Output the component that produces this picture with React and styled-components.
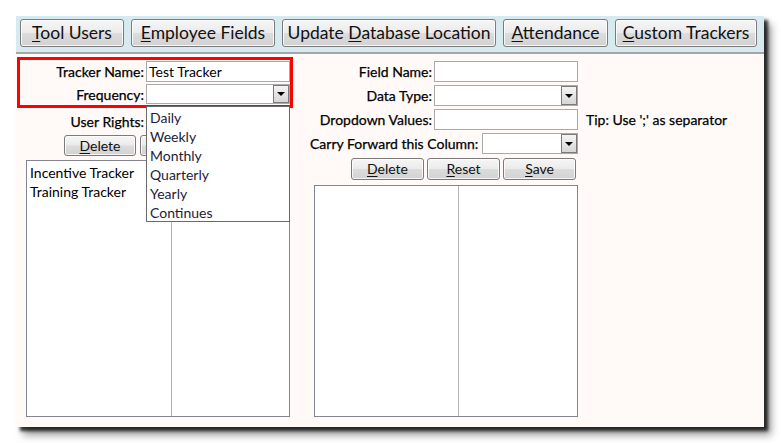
import React from "react";
import styled, { createGlobalStyle } from "styled-components";

const Global = createGlobalStyle`
  html, body {
    margin: 0;
    padding: 0;
    background: #ffffff;
  }
  body {
    font-family: "Lato", "Open Sans", sans-serif;
  }
`;

const Page = styled.div`
  min-height: 443px;
  box-sizing: border-box;
  padding: 16px 0 0 16px;
`;

const Window = styled.div`
  width: 748px;
  height: 411px;
  background: #fffaf7;
  box-shadow: 4px 4px 3px rgba(0, 0, 0, 0.75), 7px 8px 8px rgba(0, 0, 0, 0.4);
  display: flex;
  flex-direction: column;
`;

const TabBar = styled.div`
  display: flex;
  gap: 7px;
  padding: 3px 0 0 4px;
  height: 38px;
  box-sizing: border-box;
  background: #d6eaf0;
  border-bottom: 2px solid #a3a6a8;
`;

const Button = styled.button`
  width: ${(p) => p.$w}px;
  height: ${(p) => p.$h || 22}px;
  padding: 0;
  border: 1px solid #7b7b7b;
  border-radius: 3px;
  background: linear-gradient(#f6f6f6 0%, #ebebeb 48%, #dcdcdc 52%, #d2d2d2 100%);
  box-shadow: inset 0 0 0 1px rgba(255, 255, 255, 0.8);
  font-family: "Lato", "Open Sans", sans-serif;
  font-size: ${(p) => p.$fs || 14}px;
  color: #111;
  line-height: 1;
  white-space: nowrap;
  u {
    text-decoration: underline;
    text-underline-offset: 2px;
  }
`;

const Body = styled.div`
  display: flex;
  gap: 17px;
  padding: 3px 0 0 1px;
`;

const LeftCol = styled.div`
  width: 276px;
  display: flex;
  flex-direction: column;
`;

const RedBox = styled.div`
  border: 3px solid #ff0000;
  padding: 1px 0 1px 0;
  display: flex;
  flex-direction: column;
  gap: 2px;
`;

const Row = styled.div`
  display: flex;
  align-items: center;
  gap: 2px;
  height: ${(p) => p.$h || 21}px;
  margin-top: ${(p) => p.$mt || 0}px;
  padding-left: ${(p) => p.$pl || 0}px;
`;

const Label = styled.label`
  width: ${(p) => (p.$w ? `${p.$w}px` : "auto")};
  text-align: right;
  font-size: 14px;
  color: #000;
  white-space: nowrap;
  -webkit-text-stroke: 0.25px #000;
`;

const Input = styled.div`
  width: ${(p) => p.$w || 144}px;
  height: ${(p) => p.$h || 21}px;
  box-sizing: border-box;
  border: 1px solid #a9a9a9;
  background: #fff;
  font-size: 14px;
  color: #000;
  padding-left: 2px;
  line-height: 19px;
`;

const SelectBox = styled.div`
  position: relative;
  width: ${(p) => p.$w || 144}px;
  height: ${(p) => p.$h || 21}px;
  box-sizing: border-box;
  border: 1px solid #a9a9a9;
  background: #fff;
  display: flex;
  justify-content: flex-end;
`;

const Arrow = styled.div`
  width: 16px;
  height: 100%;
  box-sizing: border-box;
  border: 1px solid #7a7a7a;
  background: linear-gradient(#f4f4f4, #d6d6d6);
  display: flex;
  align-items: center;
  justify-content: center;
  &::after {
    content: "";
    border-left: 4px solid transparent;
    border-right: 4px solid transparent;
    border-top: 4px solid #000;
  }
`;

const DropList = styled.ul`
  position: absolute;
  z-index: 5;
  left: -1px;
  top: calc(100% + 3px);
  width: 144px;
  height: 116px;
  box-sizing: border-box;
  margin: 0;
  padding: 1px 0 0 3px;
  list-style: none;
  background: #fff;
  border: 1px solid #6a6a6a;
  li {
    font-size: 14px;
    line-height: 19px;
    color: #1c1c3a;
  }
`;

const ButtonRow = styled.div`
  display: flex;
  gap: ${(p) => p.$gap || 4}px;
  justify-content: ${(p) => p.$justify || "flex-start"};
  width: ${(p) => (p.$w ? `${p.$w}px` : "auto")};
  box-sizing: border-box;
  padding: ${(p) => p.$pad || "0"};
  margin-top: ${(p) => p.$mt || 0}px;
`;

const ListBox = styled.div`
  width: 264px;
  height: ${(p) => p.$h}px;
  box-sizing: border-box;
  margin: ${(p) => p.$m};
  border: 1px solid #838690;
  background: #fff;
  display: grid;
  grid-template-columns: ${(p) => p.$split}px 1fr;
`;

const ListCol = styled.div`
  border-right: ${(p) => (p.$last ? "none" : "1px solid #b4b4b4")};
  padding: 2px 0 0 3px;
  font-size: 14px;
  color: #000;
  line-height: 19px;
`;

const RightCol = styled.div`
  display: flex;
  flex-direction: column;
  padding-top: 4px;
`;

const Fields = styled.div`
  display: flex;
  flex-direction: column;
  gap: 3px;
`;

const Pair = styled.div`
  width: 268px;
  display: flex;
  justify-content: flex-end;
  align-items: center;
  gap: ${(p) => p.$gap || 2}px;
`;

const Tip = styled.span`
  margin-left: 6px;
  font-size: 14px;
  color: #000;
  white-space: nowrap;
  -webkit-text-stroke: 0.25px #000;
`;

const tabs = [
  { k: "T", rest: "ool Users", w: 104 },
  { k: "E", rest: "mployee Fields", w: 144 },
  { pre: "Update ", k: "D", rest: "atabase Location", w: 214 },
  { k: "A", rest: "ttendance", w: 105 },
  { k: "C", rest: "ustom Trackers", w: 142 },
];

const freq = ["Daily", "Weekly", "Monthly", "Quarterly", "Yearly", "Continues"];

export default function App() {
  return (
    <Page>
      <Global />
      <Window>
        <TabBar>
          {tabs.map((t) => (
            <Button key={t.rest} $w={t.w} $h={28} $fs={17.5}>
              {t.pre}
              <u>{t.k}</u>
              {t.rest}
            </Button>
          ))}
        </TabBar>
        <Body>
          <LeftCol>
            <RedBox>
              <Row>
                <Label $w={124}>Tracker Name:</Label>
                <Input>Test Tracker</Input>
              </Row>
              <Row $h={20}>
                <Label $w={124}>Frequency:</Label>
                <SelectBox $h={20}>
                  <Arrow />
                  <DropList>
                    {freq.map((f) => (
                      <li key={f}>{f}</li>
                    ))}
                  </DropList>
                </SelectBox>
              </Row>
            </RedBox>
            <Row $h={20} $mt={3} $pl={3}>
              <Label $w={124}>User Rights:</Label>
              <SelectBox $h={20}>
                <Arrow />
              </SelectBox>
            </Row>
            <ButtonRow $pad="0 0 0 47px" $mt={4}>
              <Button $w={72} $h={21}>
                <u>D</u>elete
              </Button>
              <Button $w={72} $h={21} aria-label="Reset" />
            </ButtonRow>
            <ListBox $h={257} $m="4px 0 0 9px" $split={145}>
              <ListCol>
                Incentive Tracker
                <br />
                Training Tracker
              </ListCol>
              <ListCol $last />
            </ListBox>
          </LeftCol>
          <RightCol>
            <Fields>
              <Row>
                <Pair>
                  <Label>Field Name:</Label>
                  <Input />
                </Pair>
              </Row>
              <Row>
                <Pair>
                  <Label>Data Type:</Label>
                  <SelectBox>
                    <Arrow />
                  </SelectBox>
                </Pair>
              </Row>
              <Row>
                <Pair>
                  <Label>Dropdown Values:</Label>
                  <Input />
                </Pair>
                <Tip>Tip: Use ';' as separator</Tip>
              </Row>
              <Row>
                <Pair $gap={4}>
                  <Label>Carry Forward this Column:</Label>
                  <SelectBox $w={96}>
                    <Arrow />
                  </SelectBox>
                </Pair>
              </Row>
            </Fields>
            <ButtonRow $justify="flex-end" $gap={3} $pad="0 2px 0 0" $mt={4} $w={268}>
              <Button $w={73}>
                <u>D</u>elete
              </Button>
              <Button $w={73}>
                <u>R</u>eset
              </Button>
              <Button $w={73}>
                <u>S</u>ave
              </Button>
            </ButtonRow>
            <ListBox $h={232} $m="5px 0 0 4px" $split={144}>
              <ListCol />
              <ListCol $last />
            </ListBox>
          </RightCol>
        </Body>
      </Window>
    </Page>
  );
}
